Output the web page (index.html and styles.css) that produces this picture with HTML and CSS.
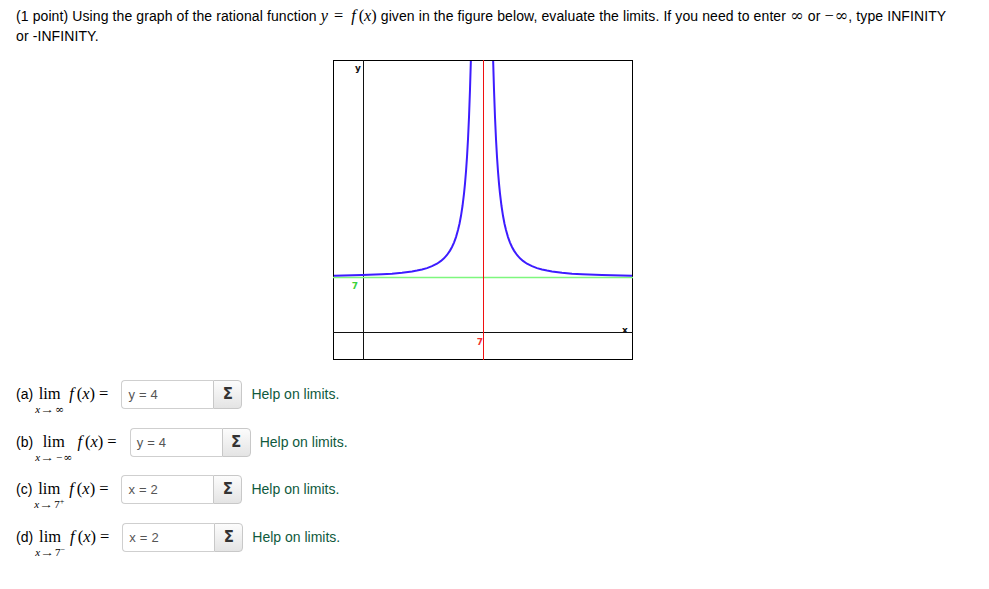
FILE: index.html
```html
<!DOCTYPE html>
<html>
<head>
<meta charset="utf-8">
<link rel="stylesheet" href="styles.css">
</head>
<body>
<div class="page">
  <p class="prompt">(1 point) Using the graph of the rational function <span class="m"><i>y</i><span class="eq">=</span><i class="f">f</i>(<i>x</i>)</span> given in the figure below, evaluate the limits. If you need to enter <span class="m"><span class="inf">∞</span></span> or <span class="m"><span class="minus">−</span><span class="inf">∞</span></span>, type INFINITY<br>or -INFINITY.</p>

  <div class="figure">
    <svg width="300" height="300" viewBox="0 0 300 300">
      <rect x="0.5" y="0.5" width="299" height="299" fill="#fff" stroke="#000" stroke-width="1"/>
      <line x1="30.5" y1="0" x2="30.5" y2="300" stroke="#111" stroke-width="1"/>
      <line x1="0" y1="272.5" x2="300" y2="272.5" stroke="#111" stroke-width="1"/>
      <line x1="0" y1="217.5" x2="300" y2="217.5" stroke="#7ef77e" stroke-width="1.3"/>
      <line x1="150.5" y1="0" x2="150.5" y2="300" stroke="#f01010" stroke-width="1"/>
      <path fill="none" stroke="#3d1cff" stroke-width="2" d="M1,215.8 L29,215.1 L49,214.3 L59,213.7 L69,212.8 L79,211.5 L84,210.6 L89,209.5 L94,208.1 L99,206.2 L104,203.7 L108,200.9 L111,198.3 L114,195 L117,190.6 L119,187 L121,182.6 L123,177.1 L125,170.1 L126.5,163.7 L128,155.8 L129.5,146 L131,133.7 L132,123.6 L133,111.5 L134,97 L135,79.2 L136,57.2 L137,29.5 L137.85,1"/>
      <path fill="none" stroke="#3d1cff" stroke-width="2" d="M160.15,1 L161,29.5 L162,57.2 L163,79.2 L164,97 L165,111.5 L166,123.6 L167,133.7 L168.5,146 L170,155.8 L171.5,163.7 L173,170.1 L175,177.1 L177,182.6 L179,187 L181,190.6 L184,195 L187,198.3 L190,200.9 L194,203.7 L199,206.2 L204,208.1 L209,209.5 L214,210.6 L219,211.5 L229,212.8 L239,213.7 L249,214.3 L269,215.1 L299,215.8"/>
      <text x="25" y="11" class="lbl" fill="#111">y</text>
      <text x="292" y="273" class="lbl" fill="#111">x</text>
      <text x="22" y="229" class="lbl" fill="#3ad13a">7</text>
      <text x="147" y="285" class="lbl" fill="#f03030">7</text>
    </svg>
  </div>

  <div class="answers">
    <div class="row">
      <span class="tag">(a)</span>
      <span class="lim"><span class="limw">lim</span><span class="sub"><i>x</i><span class="arr">→</span><span class="sinf">∞</span></span></span>
      <span class="fx"><i class="f">f</i>(<i>x</i>)<span class="eq">=</span></span>
      <span class="ans"><span class="field">y = 4</span><span class="sigma">Σ</span></span>
      <a class="help">Help on limits.</a>
    </div>
    <div class="row">
      <span class="tag">(b)</span>
      <span class="lim"><span class="limw">lim</span><span class="sub"><i>x</i><span class="arr">→</span><span class="sminus">−</span><span class="sinf">∞</span></span></span>
      <span class="fx"><i class="f">f</i>(<i>x</i>)<span class="eq">=</span></span>
      <span class="ans"><span class="field">y = 4</span><span class="sigma">Σ</span></span>
      <a class="help">Help on limits.</a>
    </div>
    <div class="row">
      <span class="tag">(c)</span>
      <span class="lim"><span class="limw">lim</span><span class="sub"><i>x</i><span class="arr">→</span>7<span class="sup">+</span></span></span>
      <span class="fx"><i class="f">f</i>(<i>x</i>)<span class="eq">=</span></span>
      <span class="ans"><span class="field">x = 2</span><span class="sigma">Σ</span></span>
      <a class="help">Help on limits.</a>
    </div>
    <div class="row">
      <span class="tag">(d)</span>
      <span class="lim"><span class="limw">lim</span><span class="sub"><i>x</i><span class="arr">→</span>7<span class="sup">−</span></span></span>
      <span class="fx"><i class="f">f</i>(<i>x</i>)<span class="eq">=</span></span>
      <span class="ans"><span class="field">x = 2</span><span class="sigma">Σ</span></span>
      <a class="help">Help on limits.</a>
    </div>
  </div>
</div>
</body>
</html>
```
FILE: styles.css
```css
html, body {
  margin: 0;
  padding: 0;
  background: #fff;
}
body {
  font-family: "Liberation Sans", Arial, Helvetica, sans-serif;
  font-size: 14px;
  color: #000;
}
.page {
  padding: 6px 16px 40px 16px;
}
.prompt {
  margin: 0;
  line-height: 20px;
  white-space: nowrap;
  letter-spacing: 0.1px;
}
.m {
  font-family: "Liberation Serif", "Times New Roman", serif;
  font-size: 16.3px;
  letter-spacing: 0;
}
.f {
  padding: 0 3px 0 2px;
}
.eq {
  padding: 0 6px;
}
.inf {
  font-family: "DejaVu Serif", serif;
  font-size: 16.5px;
}
.minus {
  padding-right: 1px;
}
.figure {
  margin: 14px 0 0 317px;
  height: 300px;
}
.figure svg {
  display: block;
}
.lbl {
  font-family: "DejaVu Sans", sans-serif;
  font-size: 9px;
  font-weight: bold;
  text-anchor: middle;
}
.answers {
  margin-top: 20px;
  display: flex;
  flex-direction: column;
  gap: 18.7px;
}
.row {
  display: flex;
  align-items: baseline;
  height: 29px;
}
.tag {
  line-height: 20px;
}
.lim {
  display: inline-flex;
  flex-direction: column;
  align-items: center;
  margin-left: 2px;
  font-family: "Liberation Serif", "Times New Roman", serif;
}
.limw {
  font-size: 16.5px;
  line-height: 18px;
}
.sub {
  font-size: 11px;
  line-height: 12px;
  white-space: nowrap;
}
.arr {
  display: inline-block;
  transform: scaleX(1.3);
  margin: 0 2px;
}
.sminus {
  padding: 0 1px;
}
.sinf {
  font-family: "DejaVu Serif", serif;
  font-size: 11px;
}
.sup {
  display: inline-block;
  font-size: 8px;
  line-height: 8px;
  position: relative;
  top: -4px;
}
.fx {
  margin-left: 3px;
  font-family: "Liberation Serif", "Times New Roman", serif;
  font-size: 16.5px;
  white-space: nowrap;
}
.fx .eq {
  padding: 0 0 0 4px;
}
.ans {
  display: inline-flex;
  margin-left: 13px;
  height: 29px;
  box-sizing: border-box;
  line-height: 27px;
}
.field {
  width: 92px;
  box-sizing: border-box;
  border: 1px solid #cfcfcf;
  border-right: none;
  border-radius: 4px 0 0 4px;
  padding-left: 6px;
  font-size: 13px;
  letter-spacing: 0.2px;
  color: #555;
  background: #fff;
}
.sigma {
  width: 29px;
  box-sizing: border-box;
  border: 1px solid #c8c8c8;
  border-radius: 0 4px 4px 0;
  background: linear-gradient(#fcfcfc, #e4e4e4);
  text-align: center;
  font-family: "DejaVu Sans", sans-serif;
  font-weight: bold;
  font-size: 15px;
  color: #333;
}
.help {
  margin-left: 9px;
  color: #0f5a3d;
  font-size: 14px;
  text-decoration: none;
}
```
